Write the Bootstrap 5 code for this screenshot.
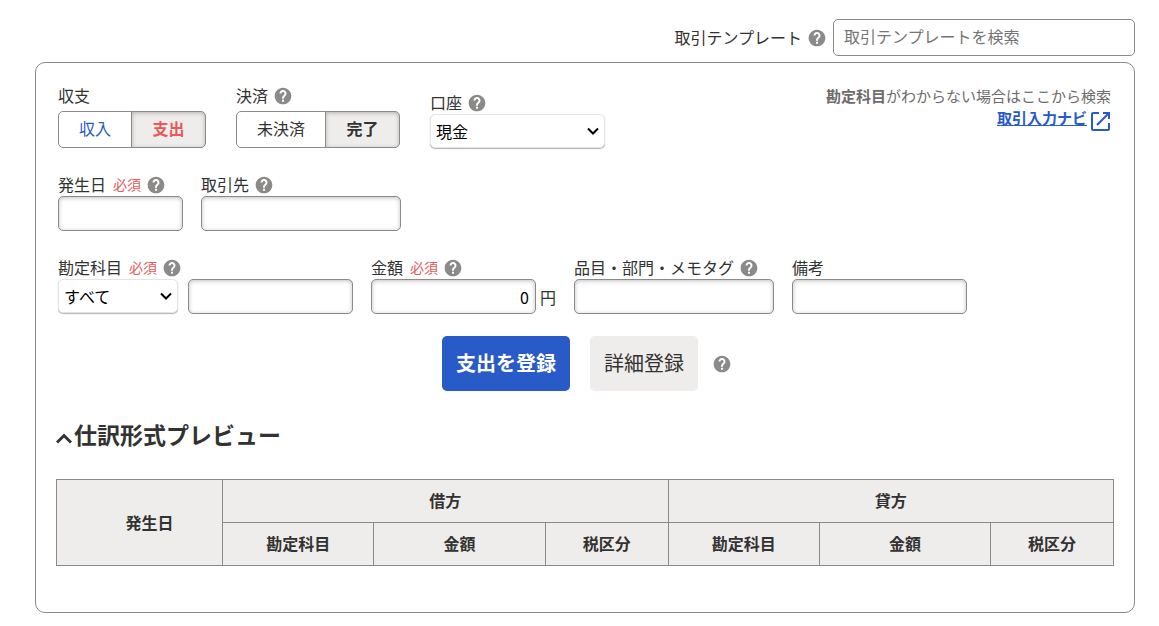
<!DOCTYPE html>
<html lang="ja">
<head>
<meta charset="utf-8">
<meta name="viewport" content="width=device-width, initial-scale=1">
<title>取引登録</title>
<link href="https://cdn.jsdelivr.net/npm/bootstrap@5.3.0/dist/css/bootstrap.min.css" rel="stylesheet">
<style>
  :root { --ink: #323232; --line: #8c8989; --soft: #efedeb; --blue: #285ac8; --red: #e65a5a; }
  body { font-family: "Noto Sans CJK JP", sans-serif; font-size: 16px; line-height: 22px; color: var(--ink); background: #fff; }
  .page { padding: 19px 24px 13px 35px; }
  .help { display: inline-flex; padding: 0; border: 0; background: none; color: var(--line); }
  .help svg { width: 20px; height: 20px; margin: -2px; }
  .template-search { width: 302px; height: 37px; border-color: var(--line); border-radius: 5px; padding: 0 10px 4px; }
  .template-search::placeholder { color: #757575; }
  .panel { border: 1px solid var(--line); border-radius: 10px; padding: 22px 20px 46px; margin-top: 6px; }
  .form-line { padding: 0 2px; }
  .form-line + .form-line { margin-top: 26px; }
  .fields { gap: 18px; }
  .fields-wide { gap: 30px; }
  .caption { display: flex; align-items: center; gap: 7px; height: 22px; white-space: nowrap; }
  .caption label, .caption > span { padding-bottom: 2px; }
  .caption-toggle { margin-bottom: 4px; }
  .must { font-size: 14px; color: var(--red); }
  .entry { height: 35px; border-color: var(--line); border-radius: 5px; padding: 0 6px; color: #000; box-shadow: inset 0 1px 4px rgba(0,0,0,.25); }
  .pick { height: 34px; border: 1px solid #e6e4e2; border-radius: 5px; padding: 0 28px 0 5px; color: #000; box-shadow: 0 1px 1px #b4b2b0;
    background-image: url("data:image/svg+xml,%3Csvg xmlns='http://www.w3.org/2000/svg' viewBox='0 0 12 8'%3E%3Cpath d='M1 1.5l5 5 5-5' fill='none' stroke='%23000' stroke-width='2'/%3E%3C/svg%3E");
    background-size: 12px 8px; background-position: right 5px center; }
  .pick-group { gap: 10px; }
  .w-date { width: 125px; } .w-kind { width: 120px; } .w-amount { width: 165px; }
  .w-memo { width: 175px; } .w-wide { width: 200px; } .w-account { width: 175px; }
  .toggle { --bs-btn-padding-x: 20px; --bs-btn-padding-y: 0; --bs-btn-border-color: var(--line); --bs-btn-color: var(--ink); --bs-btn-border-radius: 5px;
    --bs-btn-active-bg: var(--soft); --bs-btn-active-color: var(--ink); --bs-btn-active-border-color: var(--line); height: 37px; line-height: 33px; }
  .toggle-last { min-width: 75px; }
  .toggle-income { --bs-btn-color: var(--blue); --bs-btn-active-color: var(--blue); }
  .toggle-expense { --bs-btn-color: var(--red); --bs-btn-active-color: var(--red); }
  .btn-check:checked + .toggle { font-weight: 700; box-shadow: inset 0 1px 4px rgba(0,0,0,.25); }
  .navi { font-size: 15px; line-height: 22px; color: #6e6b6b; padding-right: 1px; }
  .navi a { color: var(--blue); }
  .navi svg { width: 20px; height: 20px; }
  .action { --bs-btn-padding-x: 13px; --bs-btn-padding-y: 0; --bs-btn-border-radius: 5px; --bs-btn-font-size: 20px; height: 55px; padding-bottom: 2px; }
  .action-main { --bs-btn-bg: var(--blue); --bs-btn-color: #fff; --bs-btn-hover-bg: #1e46aa; --bs-btn-hover-color: #fff; }
  .action-sub { --bs-btn-bg: var(--soft); --bs-btn-color: var(--ink); --bs-btn-hover-bg: #e1dfdd; }
  .actions { margin-top: 22px; padding-left: 2px; }
  .preview-title { font-size: 23px; line-height: 32px; margin: 27px 0 29px; }
  .preview-title svg { width: 16px; height: 12px; margin-right: 2px; }
  .journal { table-layout: fixed; border-color: var(--line); color: var(--ink); margin: 0; text-align: center; }
  .journal th { background: var(--soft); padding: 9px 4px 11px; border: 1px solid var(--line); line-height: 22px; vertical-align: middle; }
  .journal .c-lead { padding-left: 24px; }
  .c-date { width: 15.7%; } .c-item { width: 14.3%; } .c-sum { width: 16.2%; } .c-tax { width: 11.6%; }
</style>
</head>
<body>
<svg class="d-none" aria-hidden="true">
  <symbol id="i-help" viewBox="0 0 24 24"><path fill="currentColor" d="M12 2C6.480 2 2 6.480 2 12s4.480 10 10 10 10-4.480 10-10S17.520 2 12 2zm1.200 17h-2.400v-2.400h2.400V19zm2.200-7.600-.9.920C13.700 13.100 13.200 13.700 13.200 15.200h-2.400v-.6c0-1.100.45-2.100 1.170-2.830l1.240-1.260c.37-.36.590-.86.590-1.410 0-1-.8-1.800-1.800-1.800s-1.800.8-1.800 1.800H7.800c0-2.320 1.880-4.200 4.200-4.200s4.200 1.880 4.200 4.200c0 .9-.3 1.700-.8 2.300z"/></symbol>
</svg>
<main class="page">
  <div class="d-flex justify-content-end align-items-center gap-2">
    <div class="caption"><label for="template">取引テンプレート</label><button type="button" class="help" aria-label="ヘルプ"><svg><use href="#i-help"/></svg></button></div>
    <input id="template" type="text" class="form-control template-search" placeholder="取引テンプレートを検索">
  </div>

  <form class="panel">
    <div class="form-line d-flex justify-content-between align-items-start">
      <div class="fields-wide d-flex align-items-end">
        <div>
          <div class="caption caption-toggle"><span id="cap-type">収支</span></div>
          <div class="btn-group d-flex" role="group" aria-labelledby="cap-type">
            <input type="radio" class="btn-check" name="type" id="income"><label class="btn toggle toggle-income" for="income">収入</label>
            <input type="radio" class="btn-check" name="type" id="expense" checked><label class="btn toggle toggle-expense toggle-last" for="expense">支出</label>
          </div>
        </div>
        <div>
          <div class="caption caption-toggle"><span id="cap-settle">決済</span><button type="button" class="help" aria-label="ヘルプ"><svg><use href="#i-help"/></svg></button></div>
          <div class="btn-group d-flex" role="group" aria-labelledby="cap-settle">
            <input type="radio" class="btn-check" name="settle" id="unsettled"><label class="btn toggle" for="unsettled">未決済</label>
            <input type="radio" class="btn-check" name="settle" id="settled" checked><label class="btn toggle toggle-last" for="settled">完了</label>
          </div>
        </div>
        <div>
          <div class="caption"><label for="account">口座</label><button type="button" class="help" aria-label="ヘルプ"><svg><use href="#i-help"/></svg></button></div>
          <select id="account" class="form-select pick w-account"><option>現金</option></select>
        </div>
      </div>
      <div class="navi text-end">
        <div><strong>勘定科目</strong>がわからない場合はここから検索</div>
        <a href="#" class="fw-bold d-inline-flex align-items-start">取引入力ナビ<svg class="ms-1 mt-1" viewBox="0 0 20 20" fill="none" stroke="currentColor" stroke-width="2"><path d="M8 2H2a1 1 0 0 0-1 1v15a1 1 0 0 0 1 1h15a1 1 0 0 0 1-1v-6M12 2h6v6M18 2L6 14"/></svg></a>
      </div>
    </div>

    <div class="form-line fields d-flex">
      <div>
        <div class="caption"><label for="date">発生日</label><span class="must">必須</span><button type="button" class="help" aria-label="ヘルプ"><svg><use href="#i-help"/></svg></button></div>
        <input id="date" type="text" class="form-control entry w-date">
      </div>
      <div>
        <div class="caption"><label for="partner">取引先</label><button type="button" class="help" aria-label="ヘルプ"><svg><use href="#i-help"/></svg></button></div>
        <input id="partner" type="text" class="form-control entry w-wide">
      </div>
    </div>

    <div class="form-line fields d-flex">
      <div>
        <div class="caption"><label for="item">勘定科目</label><span class="must">必須</span><button type="button" class="help" aria-label="ヘルプ"><svg><use href="#i-help"/></svg></button></div>
        <div class="pick-group d-flex">
          <select class="form-select pick w-kind" aria-label="分類"><option>すべて</option></select>
          <input id="item" type="text" class="form-control entry w-amount">
        </div>
      </div>
      <div>
        <div class="caption"><label for="amount">金額</label><span class="must">必須</span><button type="button" class="help" aria-label="ヘルプ"><svg><use href="#i-help"/></svg></button></div>
        <div class="d-flex align-items-center gap-1"><input id="amount" type="text" class="form-control entry w-amount text-end" value="0"><span>円</span></div>
      </div>
      <div>
        <div class="caption"><label for="tags">品目・部門・メモタグ</label><button type="button" class="help" aria-label="ヘルプ"><svg><use href="#i-help"/></svg></button></div>
        <input id="tags" type="text" class="form-control entry w-wide">
      </div>
      <div>
        <div class="caption"><label for="note">備考</label></div>
        <input id="note" type="text" class="form-control entry w-memo">
      </div>
    </div>

    <div class="actions d-flex justify-content-center align-items-center gap-3">
      <button type="button" class="btn action action-main fw-bold me-1">支出を登録</button>
      <button type="button" class="btn action action-sub">詳細登録</button>
      <button type="button" class="help" aria-label="ヘルプ"><svg><use href="#i-help"/></svg></button>
    </div>

    <h2 class="preview-title fw-bold d-flex align-items-center"><svg class="mt-2" viewBox="0 0 16 12" fill="none" stroke="currentColor" stroke-width="3"><path d="M1 10.500L8 3.500l7 7"/></svg>仕訳形式プレビュー</h2>

    <table class="table journal">
      <colgroup><col class="c-date"><col class="c-item"><col class="c-sum"><col class="c-tax"><col class="c-item"><col class="c-sum"><col class="c-tax"></colgroup>
      <thead>
        <tr><th rowspan="2" class="c-lead">発生日</th><th colspan="3">借方</th><th colspan="3">貸方</th></tr>
        <tr><th>勘定科目</th><th>金額</th><th>税区分</th><th>勘定科目</th><th>金額</th><th>税区分</th></tr>
      </thead>
    </table>
  </form>
</main>
<script src="https://cdn.jsdelivr.net/npm/bootstrap@5.3.0/dist/js/bootstrap.bundle.min.js"></script>
</body>
</html>
